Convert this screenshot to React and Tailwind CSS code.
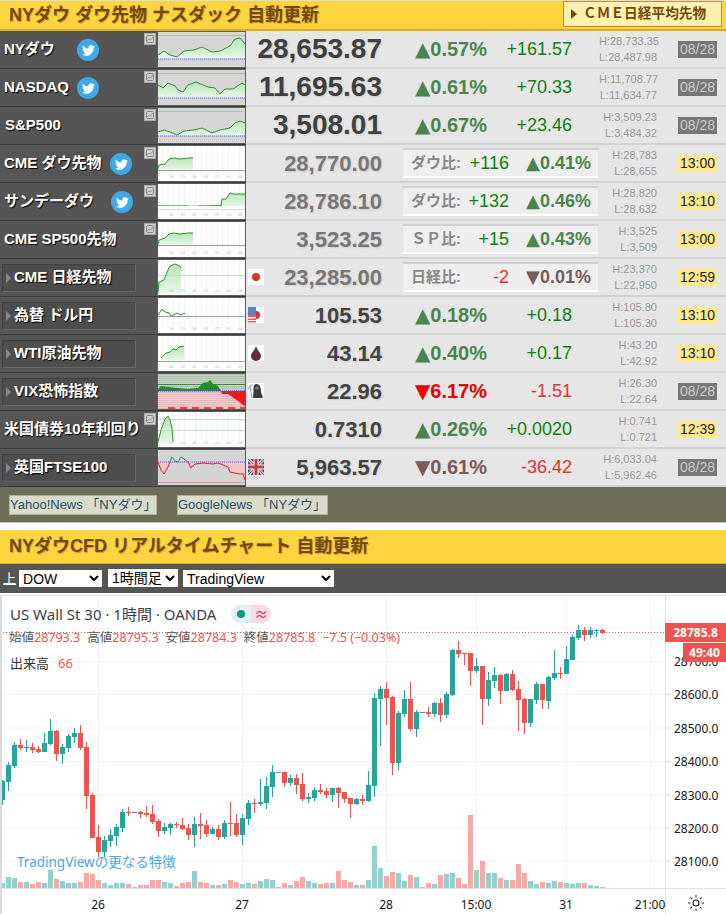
import { FaTwitter } from "react-icons/fa";
import { Sun } from "lucide-react";

const UP = "#26a69a";
const DN = "#ef5350";

// candles: [up?, wickTop, bodyTop, bodyBottom, wickBottom]
const candles = [
  [1,781,782,801,806],[1,763,766,783,792],[1,743,746,767,769],[0,740,746,749,751],[1,741,748,749,753],
  [0,744,748,751,754],[0,747,750,753,754],[1,734,744,753,753],[1,720,732,745,746],[0,731,732,755,762],
  [1,745,748,755,765],[1,735,737,749,753],[1,729,734,738,744],[0,726,734,749,751],[0,743,748,797,810],
  [0,794,796,839,839],[0,826,838,853,858],[1,837,841,853,858],[1,830,836,842,848],[1,825,828,837,847],
  [1,810,813,829,833],[0,808,813,814,817],[1,813,813,814,814],[0,812,813,815,819],[0,807,814,816,818],
  [0,806,815,823,825],[0,820,822,832,838],[1,824,828,832,835],[1,824,825,829,836],[0,823,825,826,829],
  [0,819,826,830,831],[0,825,829,836,841],[1,818,825,836,848],[0,814,825,827,840],[0,821,826,835,838],
  [1,828,830,835,835],[0,826,830,838,841],[1,821,824,838,840],[0,803,824,825,837],[0,815,824,836,838],
  [1,815,819,836,846],[1,801,804,820,826],[0,800,804,805,814],[1,780,803,805,807],[1,778,787,804,810],
  [1,766,773,788,798],[1,773,773,774,774],[0,773,773,784,788],[1,776,779,784,787],[0,775,779,786,795],
  [0,774,785,800,802],[1,794,798,800,804],[1,788,791,799,802],[0,785,791,793,795],[0,789,792,796,799],
  [1,789,789,796,803],[0,788,789,794,809],[0,793,793,800,804],[0,799,799,805,819],[1,799,800,805,806],
  [0,796,800,802,806],[1,772,786,802,803],[1,694,699,787,798],[1,687,690,700,747],[0,683,690,699,726],
  [0,697,698,764,776],[1,712,714,764,771],[1,691,700,715,718],[0,683,700,730,732],[1,711,713,730,738],
  [1,713,713,714,714],[0,708,713,715,718],[1,703,704,715,718],[0,699,704,716,723],[1,693,695,716,719],
  [1,650,651,696,697],[0,642,651,655,659],[0,654,654,655,666],[0,654,654,672,687],[1,659,667,672,674],
  [0,667,667,700,726],[1,673,681,700,707],[1,668,676,682,689],[0,675,676,692,705],[1,674,675,692,692],
  [0,671,675,691,692],[0,682,690,701,732],[0,699,700,724,735],[1,700,700,724,728],[1,683,685,701,705],
  [0,685,685,701,710],[1,677,678,702,710],[1,651,674,679,681],[0,668,674,675,680],[1,647,660,675,675],
  [1,636,638,661,661],[1,626,631,639,641],[0,628,631,636,642],[1,628,631,636,639],[1,630,631,632,638],
  [0,630,631,634,635],
];

const volumes = [
  5,11,10,6,6,4,6,5,18,9,7,5,5,6,15,14,8,5,3,5,5,4,1,3,3,8,8,6,5,2,5,6,17,6,5,3,3,4,8,6,4,5,4,7,9,8,1,5,3,7,
  11,7,5,4,5,5,17,8,6,3,3,8,42,20,12,16,15,7,13,11,1,5,4,13,14,15,10,4,73,18,27,15,15,10,8,8,24,15,7,4,6,5,7,6,5,4,5,5,3,2,1,
];

const prices = [
  ["28600.0", 695],["28500.0", 728.5],["28400.0", 762],["28300.0", 795.5],["28200.0", 828.5],["28100.0", 861.5],
];
const gridY = [629, 662, 695, 728.5, 762, 795.5, 828.5, 861.5];
const times = [["26", 98],["27", 242],["28", 386],["15:00", 476],["31", 566],["21:00", 650]];

const rows = [
  { name: "NYダウ", tw: 77, value: "28,653.87", big: true, pct: "0.57%", diff: "+161.57", h: "H:28,733.35", l: "L:28,487.98", date: "08/28",
    spark: { bg: "#d6d6d6", base: 27, dots: 27, top: 3, pts: "0,23 6,19 12,23 19,25 26,19 36,18 44,15 54,20 62,19 72,14 77,7 82,6 87,12" } },
  { name: "NASDAQ", tw: 77, value: "11,695.63", big: true, pct: "0.61%", diff: "+70.33", h: "H:11,708.77", l: "L:11,634.77", date: "08/28",
    spark: { bg: "#d6d6d6", base: 28, dots: 28, top: 3, pts: "0,15 5,18 10,13 17,16 20,20 25,22 30,15 38,12 50,17 57,18 62,24 67,19 75,19 84,13 87,15" } },
  { name: "S&P500", value: "3,508.01", big: true, pct: "0.67%", diff: "+23.46", h: "H:3,509.23", l: "L:3,484.32", date: "08/28", pad: true,
    spark: { bg: "#d6d6d6", base: 28, dots: 28, top: 3, pts: "0,24 6,22 12,24 19,27 26,23 36,22 44,20 54,25 62,22 72,20 77,15 82,13 87,15" } },
  { name: "CME ダウ先物", tw: 110, value: "28,770.00", dim: true, label: "ダウ比:", diff: "+116", pct: "0.41%", h: "H:28,783", l: "L:28,655", time: "13:00",
    spark: { bg: "#fff", vgrid: true, base: 24, gray: 24, pts: "0,23 1,19 7,18 11,13 16,12 22,13 30,12 35,12", ticks: true } },
  { name: "サンデーダウ", tw: 111, value: "28,786.10", dim: true, label: "ダウ比:", diff: "+132", pct: "0.46%", h: "H:28,820", l: "L:28,632", time: "13:10",
    spark: { bg: "#fff", vgrid: true, base: 22, flat: true, pts: "63,22 64,15 68,15 72,9 76,10 87,10", ticks: true } },
  { name: "CME SP500先物", value: "3,523.25", dim: true, label: "ＳＰ比:", diff: "+15", pct: "0.43%", h: "H:3,525", l: "L:3,509", time: "13:00",
    spark: { bg: "#fff", vgrid: true, base: 23, gray: 23, pts: "0,22 1,18 7,16 11,12 16,11 22,12 30,11 35,11", ticks: true } },
  { name: "CME 日経先物", btn: true, icon: "jp", value: "23,285.00", dim: true, label: "日経比:", diff: "-2", pct: "0.01%", down: true, mute: true, h: "H:23,370", l: "L:22,950", time: "12:59",
    spark: { bg: "#fff", vgrid: true, base: 33, hline: 15, pts: "0,32 1,22 6,20 9,12 12,6 17,4 22,6 23,8", ticks: true } },
  { name: "為替 ドル円", btn: true, icon: "us", value: "105.53", pct: "0.18%", diff: "+0.18", h: "H:105.80", l: "L:105.30", time: "13:10",
    spark: { bg: "#fff", vgrid: true, gray: 18, pts: "0,17 4,11 7,14 11,15 13,18 16,17 19,15 23,17 26,15 27,16", ticks: true } },
  { name: "WTI原油先物", btn: true, icon: "oil", value: "43.14", pct: "0.40%", diff: "+0.17", h: "H:43.20", l: "L:42.92", time: "13:10",
    spark: { bg: "#fff", vgrid: true, base: 24, gray: 25, pts: "3,22 8,17 12,16 15,13 18,14 21,11 25,10 26,11", ticks: true } },
  { name: "VIX恐怖指数", btn: true, icon: "reaper", value: "22.96", pct: "6.17%", diff: "-1.51", down: true, hot: true, h: "H:26.30", l: "L:22.64", date: "08/28", vix: true },
  { name: "米国債券10年利回り", value: "0.7310", pct: "0.26%", diff: "+0.0020", h: "H:0.741", l: "L:0.721", time: "12:39",
    spark: { bg: "#fff", vgrid: true, base: 31, hline: 7, hline2: 18, pts: "0,30 3,18 7,7 10,4 12,8 14,16 15,30", ticks: true } },
  { name: "英国FTSE100", btn: true, icon: "uk", value: "5,963.57", pct: "0.61%", diff: "-36.42", down: true, mute: true, h: "H:6,033.04", l: "L:5,962.46", date: "08/28", ftse: true },
];

function Ticks() {
  return (
    <g fill="#b5b5b5" fontSize="4" fontFamily="Liberation Sans">
      {["10", "13", "16", "19", "22", "01", "04"].map((t, i) => (
        <text key={t} x={11 + i * 11.5} y="32">{t}</text>
      ))}
    </g>
  );
}

function Spark({ s, id }) {
  const first = s.pts.split(" ")[0].split(",")[0];
  const last = s.pts.split(" ").pop().split(",")[0];
  const area = s.base ? `${first},${s.base} ${s.pts} ${last},${s.base}` : null;
  return (
    <svg width="87" height="35" viewBox="0 0 87 35" className="block">
      <defs>
        <linearGradient id={id} x1="0" y1="0" x2="0" y2="1">
          <stop offset="0" stopColor="#b8e6b8" />
          <stop offset="1" stopColor="#e8f6e8" />
        </linearGradient>
      </defs>
      <rect width="87" height="35" fill={s.bg} />
      {s.vgrid && [...Array(16)].map((_, i) => <rect key={i} x={4 + i * 5.5} y="0" width="1" height="28" fill="#f2f2f2" />)}
      {s.top && <rect y={s.top} width="87" height="1" fill="#a9c8a9" />}
      {area && <polygon points={area} fill={`url(#${id})`} />}
      {s.gray && <rect y={s.gray} width="87" height="1" fill="#a0a0a0" />}
      {s.hline && <rect y={s.hline} width="87" height="1" fill="#c4e0c4" />}
      {s.hline2 && <rect y={s.hline2} width="87" height="1" fill="#c4e0c4" />}
      {s.dots && <line x1="0" x2="87" y1={s.dots} y2={s.dots} stroke="#4a4ae8" strokeDasharray="1 1" />}
      {s.flat && (
        <g>
          <rect y="21" width="30" height="1" fill="#7fb87f" />
          <rect x="30" y="21" width="10" height="1" fill="#c8dcc8" />
          <rect x="40" y="21" width="12" height="1" fill="#d88" />
          <rect x="52" y="21" width="12" height="1" fill="#5a9f5a" />
          <rect y="25" width="87" height="1" fill="#ddd" />
        </g>
      )}
      <polyline points={s.pts} fill="none" stroke="#2f922f" strokeWidth="1" />
      {s.ticks && <Ticks />}
    </svg>
  );
}

function VixSpark() {
  return (
    <svg width="87" height="35" viewBox="0 0 87 35" className="block">
      <rect width="87" height="17" fill="#aebfae" />
      <rect y="17" width="87" height="18" fill="#e8b4b8" />
      {[...Array(8)].map((_, i) => <rect key={i} y={1 + i * 2} width="87" height="1" fill="#c6d2c6" />)}
      {[...Array(8)].map((_, i) => <rect key={i} y={19 + i * 2} width="87" height="1" fill="#f0cfd2" />)}
      <rect y="10" width="87" height="1" fill="#2f8f2f" />
      <polygon points="0,17 0,15 3,12 10,13 30,15 40,14 45,9 50,8 52,6 55,10 60,12 63,17" fill="#1f8f2a" />
      <polygon points="63,17 64,20 70,20 80,27 85,31 87,32 87,17" fill="#f01818" />
      <line x1="0" x2="87" y1="17" y2="17" stroke="#4a4ae8" strokeDasharray="1 1" />
      <line x1="10" x2="87" y1="34" y2="34" stroke="#f01818" strokeWidth="1.5" strokeDasharray="7 5" />
    </svg>
  );
}

function FtseSpark() {
  const pts = "0,12 3,20 6,24 10,17 12,12 14,7 17,11 20,12 23,7 26,9 30,12 33,18 37,14 45,13 55,14 60,13 65,15 70,17 72,22 77,23 82,24 85,24 87,30";
  return (
    <svg width="87" height="35" viewBox="0 0 87 35" className="block">
      <defs>
        <clipPath id="ftseTop"><rect width="87" height="12" /></clipPath>
        <clipPath id="ftseBot"><rect y="12" width="87" height="23" /></clipPath>
      </defs>
      <rect width="87" height="35" fill="#d4d4d4" />
      <polygon points={`0,12 ${pts} 87,12`} fill="#f3c6c6" clipPath="url(#ftseBot)" />
      <rect y="32" width="87" height="1" fill="#e58f8f" />
      <line x1="0" x2="87" y1="12" y2="12" stroke="#4a4ae8" strokeDasharray="1 1" />
      <polyline points={pts} fill="none" stroke="#2f922f" clipPath="url(#ftseTop)" />
      <polyline points={pts} fill="none" stroke="#f01818" clipPath="url(#ftseBot)" />
    </svg>
  );
}

function FlagIcon({ kind }) {
  return (
    <svg width="16" height="16" viewBox="0 0 16 16" className="block shrink-0">
      {kind !== "uk" && <rect width="16" height="16" fill="#fff" />}
      {kind === "jp" && <circle cx="8" cy="8" r="4" fill="#d8352a" />}
      {kind === "us" && (
        <g>
          <circle cx="8" cy="8" r="4" fill="#d8352a" />
          <rect y="0" width="8" height="8" fill="#5a86bd" />
          <rect y="8" width="8" height="2" fill="#e06060" />
          <rect y="10" width="8" height="1.5" fill="#fff" />
          <rect y="11.5" width="8" height="1.5" fill="#e06060" />
          <rect y="14" width="8" height="1.5" fill="#e06060" />
        </g>
      )}
      {kind === "oil" && <path d="M8 1 C9 5 13 8 13 11 A5 5 0 0 1 3 11 C3 8 7 5 8 1 Z" fill="#5c3138" />}
      {kind === "reaper" && (
        <g>
          <path d="M8.5 1 C12 1 13 5 13 9 L15 15 L5 15 L5.5 8 C5 4 6 1 8.5 1 Z" fill="#3a3a3a" />
          <circle cx="9" cy="5" r="1.8" fill="#777" />
          <path d="M0.5 6 C1 3 3 2 5 2 M2 3 L4 15" stroke="#777" strokeWidth="0.8" fill="none" />
        </g>
      )}
      {kind === "uk" && (
        <g>
          <rect y="0" width="16" height="16" fill="#3b5998" />
          <path d="M0 0 L16 16 M16 0 L0 16" stroke="#fff" strokeWidth="3" />
          <path d="M0 0 L16 16 M16 0 L0 16" stroke="#c8383f" strokeWidth="1.2" />
          <path d="M8 0 V16 M0 8 H16" stroke="#fff" strokeWidth="5" />
          <path d="M8 0 V16 M0 8 H16" stroke="#c8383f" strokeWidth="3" />
        </g>
      )}
    </svg>
  );
}

function MiniChartIcon() {
  return (
    <div className="absolute right-px top-[2px] w-[12px] h-[12px] bg-[#cfcfcf] border border-[#aaa] flex items-center justify-center">
      <svg width="8" height="8" viewBox="0 0 8 8">
        <rect x="0.5" y="0.5" width="7" height="7" rx="1" fill="none" stroke="#777" strokeWidth="0.8" />
        <polyline points="1,6 3,4 4.5,5 7,2" fill="none" stroke="#888" strokeWidth="0.8" />
      </svg>
    </div>
  );
}

function NameCell({ r }) {
  const shadow = "text-white font-bold text-[15px] [text-shadow:1px_1px_1px_#000] whitespace-nowrap";
  if (r.btn) {
    return (
      <div className="relative w-[157px] shrink-0 bg-[#555] border-b border-[#3a3a3a] flex items-center pl-[2px]">
        <div className="w-[134px] h-[28px] bg-[#4d4d4d] border border-[#3f3f3f] border-r-[#666] border-b-[#666] flex items-center">
          <span className="ml-[3px] w-0 h-0 border-y-[5px] border-y-transparent border-l-[5px] border-l-[#888]" />
          <span className={`ml-[3px] ${shadow}`}>{r.name}</span>
        </div>
      </div>
    );
  }
  return (
    <div className="relative w-[157px] shrink-0 bg-[#555] border-b border-[#3a3a3a] flex items-center">
      <span className={`${r.pad ? "ml-[5px]" : "ml-[4px]"} ${shadow}`}>{r.name}</span>
      {r.tw && (
        <span className="absolute top-[8px] w-[22px] h-[22px] rounded-full bg-[#3fa9e6] flex items-center justify-center" style={{ left: r.tw }}>
          <FaTwitter className="text-white text-[13px]" />
        </span>
      )}
      <MiniChartIcon />
    </div>
  );
}

function Pct({ r, size }) {
  const color = r.hot ? "text-[#f00000]" : r.mute ? "text-[#7a5a5a]" : "text-[#4a854f]";
  return (
    <span className={`${color} ${size} font-bold whitespace-nowrap`}>
      <span className="[font-family:'DejaVu_Sans',sans-serif]">{r.down ? "▼" : "▲"}</span>
      {r.pct}
    </span>
  );
}

function Row({ r, i }) {
  const diffColor = r.down ? "text-[#e53030]" : "text-[#118011]";
  return (
    <div className="flex h-[38px]">
      <NameCell r={r} />
      <div className="w-[89px] shrink-0 bg-[#5a5f58] border-b border-[#3a3a3a] pl-[1px] pr-px pt-[1px]">
        {r.vix ? <VixSpark /> : r.ftse ? <FtseSpark /> : <Spark s={r.spark} id={`spark${i}`} />}
      </div>
      <div className="flex-1 flex items-center bg-[#e6e6e6] border-b-2 border-[#d2d2d2]">
        <div className="w-[137px] shrink-0 pl-[2px] pr-px flex items-center justify-between">
          {r.icon ? <FlagIcon kind={r.icon} /> : <span />}
          <span
            className={`font-bold [text-shadow:1px_1px_2px_#ccc] ${r.big ? "text-[28px] text-[#3f3f3f]" : r.dim ? "text-[22px] text-[#777]" : "text-[22px] text-[#444]"}`}
          >
            {r.value}
          </span>
        </div>
        {r.label ? (
          <div className="ml-[19px] w-[197px] h-[30px] shrink-0 flex items-center bg-[#eeeeee] border-t-2 border-t-[#d0d0d0] border-b-2 border-b-white border-x border-x-[#e2e2e2]">
            <span className="ml-[8px] w-[50px] text-[#888] text-[15px] font-bold whitespace-nowrap">{r.label}</span>
            <span className={`w-[48px] text-right text-[18px] ${diffColor}`}>{r.diff}</span>
            <span className="flex-1 text-right pr-[7px]"><Pct r={r} size="text-[18px]" /></span>
          </div>
        ) : (
          <>
            <div className="w-[104px] shrink-0 text-right"><Pct r={r} size="text-[20px]" /></div>
            <div className={`w-[85px] shrink-0 text-right text-[18px] ${diffColor}`}>{r.diff}</div>
            <div className="w-[27px] shrink-0" />
          </>
        )}
        <div className="w-[58px] shrink-0 text-right text-[11px] leading-[16px] text-[#999]">
          <div>{r.h}</div>
          <div>{r.l}</div>
        </div>
        {r.date ? (
          <span className="ml-[21px] w-[39px] h-[17px] bg-[#777] text-[#ccc] text-[14px] leading-[17px] text-center">{r.date}</span>
        ) : (
          <span className="ml-[21px] w-[39px] h-[17px] bg-[#ffe98f] text-[#222] text-[14px] leading-[17px] text-center">{r.time}</span>
        )}
      </div>
    </div>
  );
}

function Heading({ children }) {
  return <span className="text-[#734a05] font-bold text-[18px] [text-shadow:1px_1px_1px_#c9a040] whitespace-nowrap">{children}</span>;
}

function Chart() {
  return (
    <div className="relative h-[318px] bg-white border-l-2 border-[#dcdcdc] overflow-hidden">
      <svg width="726" height="318" viewBox="0 597 726 318" className="absolute -left-[2px] top-0 block">
        {gridY.map((y) => <rect key={y} x="0" y={y} width="665" height="1" fill="#f0f3fa" />)}
        {times.map(([t, x]) => <rect key={t} x={x} y="597" width="1" height="292" fill="#f0f3fa" />)}
        {volumes.map((v, i) => (
          <rect key={i} x={i * 6} y={889 - v} width="5" height={v} fill={candles[i][0] ? "#93d2cc" : "#f7a9a7"} />
        ))}
        {candles.map(([up, wt, bt, bb, wb], i) => (
          <g key={i} fill={up ? UP : DN}>
            <rect x={i * 6 + 2} y={wt} width="1" height={wb - wt} />
            <rect x={i * 6} y={bt} width="5" height={Math.max(bb - bt, 1)} />
          </g>
        ))}
        <line x1="0" x2="665" y1="633.5" y2="633.5" stroke={DN} strokeDasharray="1 2" />
        <rect x="665" y="597" width="1" height="318" fill="#e0e3eb" />
        <rect x="0" y="889" width="726" height="1" fill="#e0e3eb" />
        <g fontFamily="Noto Sans" fontSize="12" fill="#131722">
          {prices.map(([p, y]) => (
            <g key={p}>
              <rect x="665" y={y} width="5" height="1" fill="#d8dbe3" />
              <text x="674" y={y + 5}>{p}</text>
            </g>
          ))}
          <text x="674" y="667">28700.0</text>
          {times.map(([t, x]) => (
            <text key={t} x={x} y="910" textAnchor="middle">{t}</text>
          ))}
        </g>
      </svg>
      <div className="absolute left-[663px] top-[27px] w-[61px] h-[19px] bg-[#ef5350] text-white font-bold text-[12px] leading-[19px] text-center [font-family:'Noto_Sans',sans-serif]">
        28785.8
      </div>
      <div className="absolute left-[681px] top-[47px] w-[43px] h-[19px] bg-[#ef5350] text-white font-bold text-[12px] leading-[19px] text-center [font-family:'Noto_Sans',sans-serif]">
        49:40
      </div>
      <div className="absolute left-[685px] top-[298px] text-[#131722]">
        <Sun size={18} strokeWidth={1.4} />
      </div>
      <div className="absolute left-[8px] top-[7px] flex items-center text-[15px] text-[#3a3e4a] whitespace-nowrap [font-family:'Noto_Sans','Noto_Sans_CJK_JP',sans-serif]">
        <span>US Wall St 30 · 1時間 · OANDA</span>
        <span className="ml-[15px] flex h-[18px] w-[40px] rounded-full overflow-hidden">
          <span className="w-[20px] bg-[#dff2f0] flex items-center justify-center">
            <span className="w-[8px] h-[8px] rounded-full bg-[#089981]" />
          </span>
          <span className="w-[20px] bg-[#fcd9e5] text-[#d81b60] text-[13px] leading-[18px] text-center">≈</span>
        </span>
      </div>
      <div className="absolute left-[7px] top-[33px] text-[12.5px] text-[#ef5350] whitespace-nowrap [font-family:'Noto_Sans','Noto_Sans_CJK_JP',sans-serif]">
        <span className="text-[#555]">始値</span>28793.3
        <span className="text-[#555] ml-[7px]">高値</span>28795.3
        <span className="text-[#555] ml-[7px]">安値</span>28784.3
        <span className="text-[#555] ml-[7px]">終値</span>28785.8
        <span className="ml-[7px]">−7.5 (−0.03%)</span>
      </div>
      <div className="absolute left-[8px] top-[58px] text-[13px] text-[#333] whitespace-nowrap [font-family:'Noto_Sans','Noto_Sans_CJK_JP',sans-serif]">
        出来高<span className="ml-[9px] text-[#ef5350]">66</span>
      </div>
      <div className="absolute left-[15px] top-[256px] text-[13.5px] text-[#4aa5ea] whitespace-nowrap [font-family:'Noto_Sans','Noto_Sans_CJK_JP',sans-serif]">
        TradingViewの更なる特徴
      </div>
    </div>
  );
}

export default function App() {
  return (
    <div className="w-[726px] h-[915px] overflow-hidden bg-white [font-family:'Liberation_Sans','Noto_Sans_CJK_JP',sans-serif]">
      {/* top table */}
      <div className="h-[31px] bg-[#ffd53f] border-t border-t-[#dddddd] border-b-2 border-b-[#e3a823] flex items-center justify-between pl-[9px] pr-[4px]">
        <Heading>NYダウ ダウ先物 ナスダック 自動更新</Heading>
        <div className="w-[159px] h-[26px] -mt-[2px] bg-[#fff1b0] border border-[#c98a30] flex items-center pl-[7px] text-[#734a05] text-[14px] font-bold whitespace-nowrap">
          <span className="w-0 h-0 border-y-[5px] border-y-transparent border-l-[6px] border-l-[#734a05]" />
          <span className="ml-[6px] text-[13.7px]">ＣＭＥ日経平均先物</span>
        </div>
      </div>
      {rows.map((r, i) => <Row key={r.name} r={r} i={i} />)}

      {/* news links */}
      <div className="h-[35px] bg-[#6e6e58] flex items-start pt-[8px] pl-[9px] gap-[20px]">
        <span className="w-[148px] h-[20px] bg-[#d9dccb] border border-[#b0b0a0] text-[13px] leading-[18px] text-[#2b4a6b] whitespace-nowrap">Yahoo!News 「NYダウ」</span>
        <span className="w-[151px] h-[20px] bg-[#d9dccb] border border-[#b0b0a0] text-[13px] leading-[18px] text-[#2b4a6b] whitespace-nowrap">GoogleNews 「NYダウ」</span>
      </div>
      <div className="h-[8px] border-t border-[#ccc]" />

      {/* realtime chart */}
      <div className="h-[34px] bg-[#ffd53f] border-b border-b-[#e3a823] flex items-center pl-[9px]">
        <Heading>NYダウCFD リアルタイムチャート 自動更新</Heading>
      </div>
      <div className="h-[29px] bg-[#555] flex items-center text-[14px]">
        <span className="ml-[3px] text-white underline text-[13px]">上</span>
        <select className="ml-[3px] w-[83px] h-[17px] bg-white text-[14px] text-black" defaultValue="DOW">
          <option>DOW</option>
        </select>
        <select className="ml-[6px] w-[70px] h-[18px] -mt-[2px] bg-white text-[14px] text-black" defaultValue="1時間足">
          <option>1時間足</option>
        </select>
        <select className="ml-[5px] w-[151px] h-[17px] bg-white text-[14px] text-black" defaultValue="TradingView">
          <option>TradingView</option>
        </select>
      </div>
      <div className="h-[3px] border-b border-[#dcdcdc]" />
      <Chart />
    </div>
  );
}
